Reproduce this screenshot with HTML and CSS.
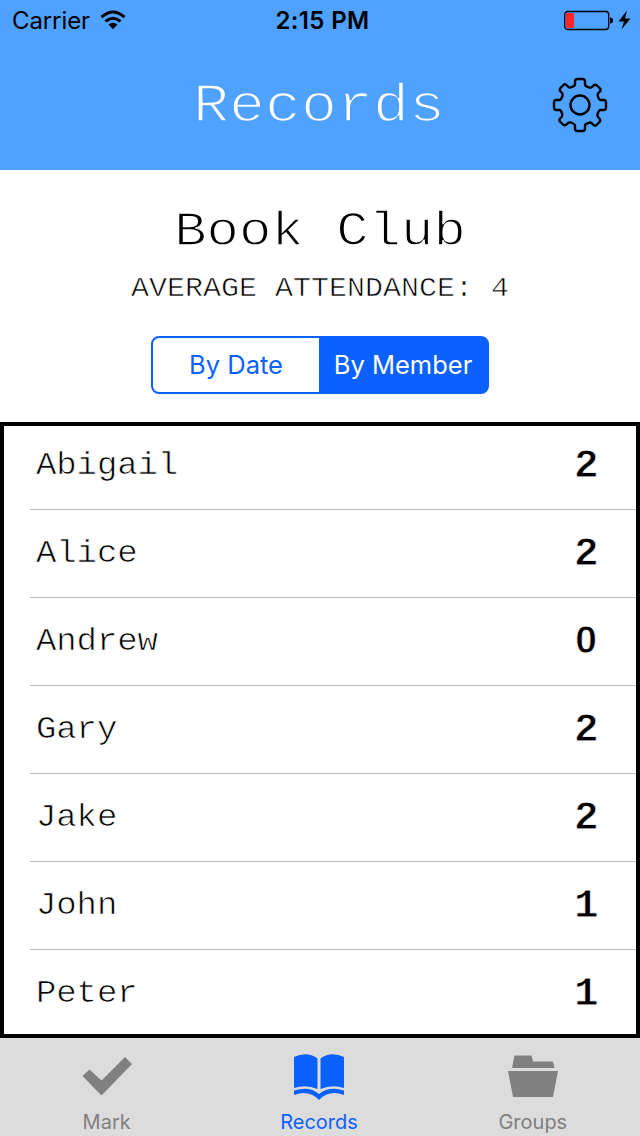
FILE: index.html
```html
<!DOCTYPE html>
<html lang="en">
<head>
<meta charset="utf-8">
<title>Records</title>
<link rel="stylesheet" href="styles.css">
</head>
<body>
<header class="header">
  <div class="status">
    <div class="carrier"><span class="carrier-name">Carrier</span>
      <svg width="26" height="20" viewBox="0 0 26 20"><g fill="none" stroke="#000" stroke-width="3"><path d="M1.500 7.200Q13-3.200 24.500 7.200"/><path d="M5.500 11.400Q13 5 20.500 11.400"/></g><path d="M8.500 14.500Q13 10.800 17.500 14.500L13 19.300Z"/></svg>
    </div>
    <span class="time">2:15 PM</span>
    <svg class="battery" width="68" height="22" viewBox="0 0 68 22"><rect x=".7" y="2.500" width="44" height="18" rx="3" fill="none" stroke="#000" stroke-width="1.300"/><rect x="2" y="4" width="8" height="15" rx="1" fill="#ff2529"/><path d="M46 8.500Q49 8.500 49 11.500T46 14.500Z"/><path d="M63 1.500L54.500 12.500H60L57.500 20.500L66.500 9.500H61Z"/></svg>
  </div>
  <div class="navbar">
    <h1 class="mono title">Records</h1>
    <svg class="gear" width="56" height="56" viewBox="-28 -28 56 56"><g fill="none" stroke="#000" stroke-width="2.400" stroke-linejoin="round"><circle r="9.500"/><path d="M-5-23.500Q-5-26-2.500-26H2.500Q5-26 5-23.500V-20.500Q5-19 9-17.500Q11-17 12-18L13.500-19.500Q15-21 17-19.500L20-16.500Q21.500-15 19.500-13L18-11.500Q17-10.500 18-8.500Q19-5 20.500-5H23.500Q26-5 26-2.500V2.500Q26 5 23.500 5H20.500Q19 5 17.500 9Q17 11 18 12L19.500 13.500Q21 15 19.500 17L16.500 20Q15 21.500 13 19.500L11.500 18Q10.500 17 8.500 18Q5 19 5 20.500V23.500Q5 26 2.500 26H-2.500Q-5 26-5 23.500V20.500Q-5 19-9 17.500Q-11 17-12 18L-13.500 19.500Q-15 21-17 19.500L-20 16.500Q-21.500 15-19.500 13L-18 11.500Q-17 10.500-18 8.500Q-19 5-20.500 5H-23.500Q-26 5-26 2.500V-2.500Q-26-5-23.500-5H-20.500Q-19-5-17.500-9Q-17-11-18-12L-19.500-13.500Q-21-15-19.500-17L-16.500-20Q-15-21.500-13-19.500L-11.500-18Q-10.500-17-8.500-18Q-5-19-5-20.500Z"/></g></svg>
  </div>
</header>
<section class="summary">
  <h2 class="mono group">Book Club</h2>
  <p class="mono average">AVERAGE ATTENDANCE: 4</p>
  <div class="segments"><button class="segment by-date">By Date</button><button class="segment selected">By Member</button></div>
</section>
<main class="list">
  <div class="row first"><span class="mono name">Abigail</span><b class="count">2</b></div>
  <div class="row"><span class="mono name">Alice</span><b class="count">2</b></div>
  <div class="row"><span class="mono name">Andrew</span><b class="count zero">0</b></div>
  <div class="row"><span class="mono name">Gary</span><b class="count">2</b></div>
  <div class="row"><span class="mono name">Jake</span><b class="count">2</b></div>
  <div class="row"><span class="mono name">John</span><b class="count">1</b></div>
  <div class="row last"><span class="mono name">Peter</span><b class="count">1</b></div>
</main>
<nav class="tabs">
  <div class="tab"><svg width="52" height="50" viewBox="0 0 52 50"><path fill="#808080" d="M1.500 26L8.500 19.500L20.500 30.500L44 7L51 14L20.500 45.500Z"/></svg><span class="mark">Mark</span></div>
  <div class="tab active"><svg width="52" height="50" viewBox="0 0 52 50"><g fill="#0b61ff"><path d="M1 7Q14 1 24.500 8.500V39Q13 34 1 38Z"/><path d="M51 7Q38 1 27.500 8.500V39Q39 34 51 38Z"/><path d="M1 40.500Q16 35.500 26 44Q36 35.500 51 40.500V45Q36 39.500 26 50Q16 39.500 1 45Z"/></g></svg><span class="records">Records</span></div>
  <div class="tab"><svg width="52" height="50" viewBox="0 0 52 50"><path fill="#808080" d="M5 18L7.500 5.500H24.500L26 11.500H46L47.500 18ZM1 21H51L46 47H6Z"/></svg><span class="groups">Groups</span></div>
</nav>
</body>
</html>
```
FILE: styles.css
```css
* { box-sizing: border-box; }
body { margin: 0; width: 640px; height: 1136px; background: #fff; color: #000; font-family: Inter, "Liberation Sans", sans-serif; overflow: hidden; }
h1, h2, p { margin: 0; font-weight: 400; }
svg { display: block; }
.mono { display: block; font-family: "Liberation Mono", monospace; white-space: pre; transform: scaleY(.9); -webkit-text-stroke: .7px #fff; }
.header { height: 170px; background: #4fa2ff; }
.status { height: 40px; display: grid; grid-template-columns: 1fr auto 1fr; align-items: center; padding: 0 8px 0 12px; }
.carrier { display: flex; align-items: center; gap: 10px; font-size: 24px; letter-spacing: -.1px; }
.time { font-size: 24px; font-weight: 600; letter-spacing: .35px; margin-left: 1px; }
.battery { justify-self: end; }
.navbar { height: 130px; display: grid; grid-template-columns: 1fr auto 1fr; align-items: center; padding: 0 33px 0 31px; }
.title { grid-column: 2; color: #fff; font-size: 60px; line-height: 68px; padding-top: 4px; -webkit-text-stroke: 1.8px #4fa2ff; }
.gear { justify-self: end; margin-right: -1px; }
.summary { height: 252px; display: flex; flex-direction: column; align-items: center; padding-top: 31px; }
.group { font-size: 54px; line-height: 62px; -webkit-text-stroke: 1.5px #fff; }
.average { font-size: 30px; line-height: 34px; margin-top: 9px; }
.segments { width: 338px; height: 58px; margin-top: 30px; display: flex; border: 2px solid #0b61ff; border-radius: 8px; background: #0b61ff; }
.segment { flex: 1; padding: 0 0 2px; border: 0; font: 400 25.5px Inter, sans-serif; }
.by-date { flex: 0 0 166px; background: #fff; color: #0b61ff; border-radius: 6px 0 0 6px; }
.selected { background: transparent; color: #fff; }
.list { height: 616px; border: 4px solid #000; padding-left: 26px; }
.row { height: 88px; display: flex; align-items: center; justify-content: space-between; padding: 0 38px 0 6px; border-bottom: 1px solid #bbb; }
.first { height: 84px; padding-bottom: 4px; }
.last { height: 84px; border: 0; padding-top: 3px; }
.name { font-size: 34px; line-height: 40px; letter-spacing: -.1px; }
.count { width: 24px; text-align: center; font: 700 41px/44px "Liberation Mono", monospace; -webkit-text-stroke: .8px #fff; }
.zero { font-family: "Liberation Sans", sans-serif; font-size: 39px; padding-bottom: 4px; }
.tabs { height: 98px; display: grid; grid-template-columns: repeat(3, 1fr); background: #dcdcdc; }
.tab { display: flex; flex-direction: column; align-items: center; padding-top: 12px; color: #808080; font-size: 20px; line-height: 24px; gap: 10px; }
.tab.active { color: #0b61ff; padding-right: 2px; }
.groups { margin-right: 1px; }
```
